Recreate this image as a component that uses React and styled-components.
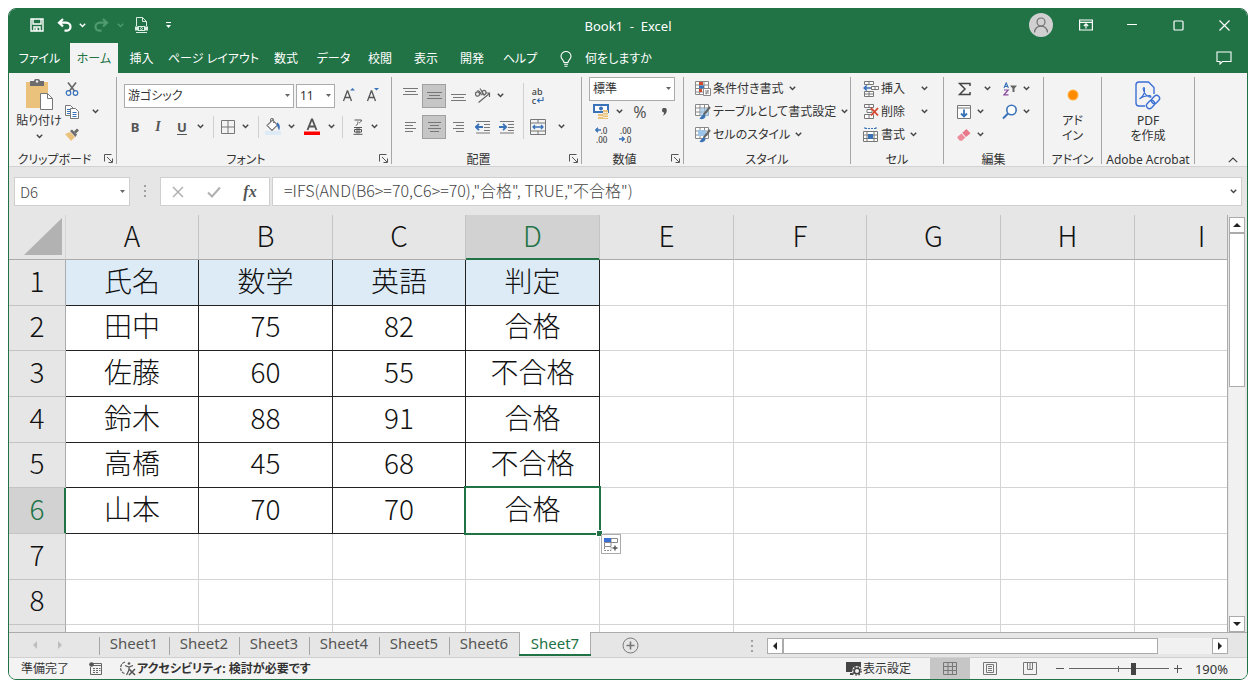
import React from "react";
import styled, { createGlobalStyle, css } from "styled-components";

const c = {
  green: "#217346",
  ribbon: "#f3f3f3",
  chrome: "#e6e6e6",
  line: "#ababab",
  gridLine: "#d4d4d4",
  ink: "#333333",
  blue: "#3a72b8",
};

const Global = createGlobalStyle`
  *, *::before, *::after { box-sizing: border-box; }
  body {
    margin: 0;
    padding: 8px 10px 9px 8px;
    background: #fff;
    color: ${c.ink};
    font: 12px/16px "Noto Sans", "Noto Sans CJK JP", sans-serif;
    font-feature-settings: "palt";
  }
  button, input, select {
    font: inherit;
    font-feature-settings: inherit;
    color: inherit;
    margin: 0;
  }
  svg { display: block; flex: none; }
`;

/* ---------- frame ---------- */

const Window = styled.div`
  display: flex;
  flex-direction: column;
  height: calc(100vh - 17px);
  min-height: 480px;
  border: 1px solid ${c.green};
  border-radius: 8px;
  overflow: hidden;
  background: ${c.ribbon};
`;

const TitleBar = styled.header`
  display: grid;
  grid-template-columns: 1fr auto 1fr;
  align-items: center;
  height: 34px;
  flex: none;
  background: ${c.green};
  color: #fff;
`;

const QuickAccess = styled.div`
  display: flex;
  align-items: center;
  padding: 0 0 2px 15px;
`;

const Title = styled.h1`
  margin: 0;
  font-size: 13px;
  font-weight: 400;
  white-space: pre;
`;

const Controls = styled.div`
  display: flex;
  justify-content: flex-end;
  padding-bottom: 2px;
`;

const Tool = styled.button`
  display: flex;
  flex: none;
  align-items: center;
  justify-content: center;
  width: ${(p) => p.$w || 24}px;
  height: ${(p) => p.$h || 23}px;
  padding: 0;
  border: 0;
  background: none;
  ${(p) =>
    p.$pressed &&
    css`
      background: #c6c6c6;
      border: 1px solid #a0a0a0;
    `}
`;

const TabRow = styled.nav`
  display: flex;
  align-items: stretch;
  height: 30px;
  flex: none;
  background: ${c.green};
  color: #fff;
`;

const Tab = styled.button`
  width: ${(p) => p.$w}px;
  padding: 2px 0 0;
  border: 0;
  white-space: nowrap;
  background: ${(p) => (p.$active ? c.ribbon : "none")};
  color: ${(p) => (p.$active ? c.green : "#fff")};
`;

const TellMe = styled.button`
  display: flex;
  align-items: center;
  gap: 13px;
  padding: 2px 0 0 15px;
  border: 0;
  background: none;
  white-space: nowrap;
`;

const Spacer = styled.div`
  flex: 1;
`;

/* ---------- ribbon ---------- */

const Ribbon = styled.div`
  display: flex;
  height: 94px;
  flex: none;
  padding-top: 4px;
  background: ${c.ribbon};
  border-bottom: 1px solid #d2d2d2;
`;

const Group = styled.section`
  display: flex;
  flex-direction: column;
  flex: none;
  width: ${(p) => p.$w}px;
  height: 87px;
  border-right: 1px solid #a6a6a6;
`;

const GroupBody = styled.div`
  display: flex;
  flex: 1;
  padding-left: ${(p) => p.$pad || 0}px;
`;

const GroupFoot = styled.div`
  display: grid;
  grid-template-columns: 1fr ${(p) => (p.$launch ? "16px" : "0")};
  align-items: center;
  height: 14px;
  text-align: center;
  white-space: nowrap;
`;

const GroupName = styled.span`
  padding-top: 3px;
  line-height: 14px;
`;

const Stack = styled.div`
  display: flex;
  flex-direction: column;
  padding-top: ${(p) => p.$top || 0}px;
`;

const Line = styled.div`
  display: flex;
  align-items: center;
  height: ${(p) => p.$h || 23}px;
  gap: ${(p) => p.$gap || 0}px;
  white-space: nowrap;
`;

const Rule = styled.span`
  flex: none;
  width: 1px;
  height: ${(p) => p.$h || 22}px;
  margin: ${(p) => p.$m || "0"};
  background: #d0d0d0;
`;

const Gap = styled.span`
  flex: none;
  width: ${(p) => p.$w}px;
`;

const BigButton = styled.button`
  display: flex;
  flex-direction: column;
  align-items: center;
  width: ${(p) => p.$w}px;
  padding: 0;
  border: 0;
  background: none;
  line-height: 15px;
  white-space: nowrap;
`;

const BigIcon = styled.span`
  display: flex;
  align-items: center;
  justify-content: center;
  height: 36px;
`;

const MenuButton = styled.button`
  display: flex;
  align-items: center;
  gap: 2px;
  height: 23px;
  padding: 0;
  border: 0;
  background: none;
  white-space: nowrap;
`;

const MenuText = styled.span`
  min-width: ${(p) => p.$w || 0}px;
  margin-right: 3px;
  text-align: left;
`;

const Letter = styled.span`
  font-size: ${(p) => p.$s || 14}px;
  line-height: 18px;
  font-weight: ${(p) => (p.$bold ? 700 : 400)};
  font-style: ${(p) => (p.$italic ? "italic" : "normal")};
  font-family: ${(p) => (p.$italic ? '"Liberation Serif", serif' : "inherit")};
  text-decoration: ${(p) => (p.$under ? "underline" : "none")};
  text-underline-offset: 2px;
  color: #555;
`;

const Combo = styled.span`
  position: relative;
  display: block;
  flex: none;
  width: ${(p) => p.$w}px;
  height: 24px;
  background: #fff;
  border: 1px solid #ababab;

  select {
    appearance: none;
    display: block;
    width: 100%;
    height: 22px;
    padding: 0 0 0 3px;
    border: 0;
    background: none;
  }
  svg {
    position: absolute;
    right: 3px;
    top: 9px;
    pointer-events: none;
  }
`;

const CollapseArea = styled.div`
  display: flex;
  flex: 1;
  align-items: flex-end;
  justify-content: flex-end;
  padding-right: 4px;
`;

/* ---------- formula bar ---------- */

const FormulaBar = styled.div`
  display: flex;
  align-items: flex-start;
  height: 48px;
  flex: none;
  padding: 10px 5px 0;
  background: ${c.chrome};
  color: #444;
`;

const FieldBox = styled.div`
  display: flex;
  align-items: center;
  flex: ${(p) => (p.$grow ? "1" : "none")};
  width: ${(p) => (p.$w ? p.$w + "px" : "auto")};
  height: 29px;
  padding-right: 4px;
  background: #fff;
  border: 1px solid #cfcfcf;

  input {
    flex: 1;
    min-width: 0;
    height: 27px;
    border: 0;
    background: none;
    outline: 0;
    padding: 0 0 ${(p) => (p.$grow ? "3px 11px" : "0 5px")};
    font-family: "Noto Sans CJK JP", sans-serif;
    font-size: ${(p) => (p.$grow ? 16 : 15)}px;
    font-weight: 300;
    font-feature-settings: normal;
  }
`;

const Dots = styled.span`
  display: flex;
  justify-content: center;
  align-items: center;
  width: 30px;
  height: 28px;
`;

/* ---------- sheet ---------- */

const SheetArea = styled.main`
  display: flex;
  flex: 1;
  min-height: 0;
  background: ${c.chrome};
`;

const Pane = styled.div`
  flex: 1;
  min-width: 0;
  overflow: hidden;
  border-right: 1px solid ${c.line};
`;

const Table = styled.table`
  table-layout: fixed;
  width: 1260px;
  border-spacing: 0;
  background: #fff;
  color: #111;
  font: 300 28px/36px "Noto Sans CJK JP", sans-serif;
  font-feature-settings: normal;
  text-align: center;

  th, td { padding: 0 0 6px; font-weight: 300; }
  thead tr { height: 45px; }
  thead th, thead td { padding-bottom: 4px; }
  tbody tr { height: 46px; }
  tbody tr:nth-child(3n + 2) { height: 45px; }
`;

const Corner = styled.td`
  background: ${c.chrome};
  border-right: 1px solid ${c.gridLine};
  border-bottom: 1px solid ${c.line};

  svg { margin: 3px 0 0 15px; }
`;

const ColHead = styled.th`
  background: ${(p) => (p.$on ? "#d2d2d2" : c.chrome)};
  color: ${(p) => (p.$on ? c.green : "#111")};
  border-right: 1px solid #c4c4c4;
  border-bottom: 1px solid ${(p) => (p.$on ? c.green : c.line)};
  box-shadow: ${(p) => (p.$on ? `inset 0 -1px ${c.green}` : "none")};
`;

const RowHead = styled.th`
  background: ${(p) => (p.$on ? "#d2d2d2" : c.chrome)};
  color: ${(p) => (p.$on ? c.green : "#111")};
  border-right: 1px solid ${(p) => (p.$on ? c.green : c.line)};
  border-bottom: 1px solid #c4c4c4;
  box-shadow: ${(p) => (p.$on ? `inset -1px 0 ${c.green}` : "none")};
`;

const Cell = styled.td`
  position: relative;
  background: ${(p) => (p.$head ? "#ddebf7" : "#fff")};
  border-right: 1px solid ${(p) => (p.$framed ? "#222" : c.gridLine)};
  border-bottom: 1px solid ${(p) => (p.$framed ? "#222" : c.gridLine)};
`;

const Selection = styled.span`
  position: absolute;
  inset: -2px -2px -2px -2px;
  border: 2px solid ${c.green};
  z-index: 1;

  &::after {
    content: "";
    position: absolute;
    right: -3px;
    bottom: -3px;
    width: 5px;
    height: 5px;
    background: ${c.green};
    outline: 1px solid #fff;
  }
`;

const FillOptions = styled.button`
  position: absolute;
  left: 100%;
  top: 100%;
  margin: 1px 0 0 2px;
  width: 20px;
  height: 20px;
  padding: 1px;
  border: 1px solid #ababab;
  background: #fff;
  z-index: 2;
`;

const VScroll = styled.div`
  display: flex;
  flex-direction: column;
  width: 16px;
  flex: none;
  margin: 2px 2px 0 1px;
  background: #f1f1f1;
`;

const ScrollButton = styled.button`
  display: flex;
  align-items: center;
  justify-content: center;
  flex: none;
  width: 16px;
  height: 16px;
  padding: 0;
  border: 1px solid #ababab;
  background: #fff;
`;

const Thumb = styled.div`
  flex: none;
  background: #fff;
  border: 1px solid #ababab;
  ${(p) => (p.$vertical ? "height: 37%;" : "width: 375px; height: 16px;")}
`;

/* ---------- bottom bars ---------- */

const SheetBar = styled.div`
  display: flex;
  height: 25px;
  flex: none;
  border-top: 1px solid ${c.line};
  background: ${c.chrome};
  color: #555;
`;

const SheetNav = styled.div`
  display: flex;
  width: 90px;
  padding-left: 14px;
`;

const SheetTab = styled.button`
  position: relative;
  width: ${(p) => (p.$active ? 72 : 70)}px;
  height: ${(p) => (p.$active ? 24 : 23)}px;
  margin-top: ${(p) => (p.$active ? -1 : 0)}px;
  padding: 0 0 ${(p) => (p.$active ? 2 : 3)}px;
  border: 0;
  background: ${(p) => (p.$active ? "#fff" : "none")};
  color: ${(p) => (p.$active ? c.green : "#555")};
  box-shadow: ${(p) => (p.$active ? `inset 0 -2px ${c.green}, inset 1px 0 ${c.line}, inset -1px 0 ${c.line}` : "none")};
  font-size: 15px;
  line-height: 20px;

  &::before {
    content: "";
    display: ${(p) => (p.$active ? "none" : "block")};
    position: absolute;
    left: 0;
    top: 4px;
    width: 1px;
    height: 18px;
    background: #a6a6a6;
  }
`;

const HScroll = styled.div`
  display: flex;
  width: 461px;
  height: 16px;
  margin: 5px 19px 0 14px;
  background: #f1f1f1;
`;

const StatusBar = styled.footer`
  display: flex;
  align-items: center;
  height: 22px;
  flex: none;
  padding: 0 19px 0 12px;
  border-top: 1px solid #d0d0d0;
  background: ${c.ribbon};
  white-space: nowrap;
`;

const StatusButton = styled.button`
  display: flex;
  align-items: center;
  gap: 1px;
  margin-left: ${(p) => p.$left || 0}px;
  padding: 0;
  border: 0;
  background: none;
  font-weight: ${(p) => (p.$bold ? 700 : 400)};
`;

const View = styled.button`
  display: flex;
  align-items: center;
  justify-content: center;
  width: 40px;
  height: 21px;
  padding: 0;
  border: 0;
  background: ${(p) => (p.$on ? "#c6c6c6" : "none")};
`;

const Zoom = styled.label`
  position: relative;
  display: flex;
  width: 100px;

  &::before {
    content: "";
    position: absolute;
    left: 49px;
    top: 5px;
    width: 1px;
    height: 6px;
    background: #666;
  }
  input {
    appearance: none;
    position: relative;
    width: 100px;
    height: 16px;
    background: linear-gradient(#666, #666) center / 100% 1px no-repeat;
  }
  input::-webkit-slider-thumb {
    appearance: none;
    width: 5px;
    height: 12px;
    background: #444;
  }
`;

const Percent = styled.output`
  width: 42px;
  font-size: 13px;
  text-align: right;
`;

/* ---------- icons ---------- */

const Svg = ({ w = 16, h = w, s = "#666", sw = 1, children, ...r }) => (
  <svg width={w} height={h} viewBox={`0 0 ${w} ${h}`} fill="none" stroke={s} strokeWidth={sw} aria-hidden="true" {...r}>
    {children}
  </svg>
);

const Chev = ({ color = "#444" }) => (
  <Svg w={7} h={5} s={color} sw={1.4}><path d="M.8.8 3.5 3.6 6.2.8" /></Svg>
);
const Down = ({ color = "#666" }) => (
  <Svg w={5} h={3} s="none"><path d="M0 0h5L2.5 3z" fill={color} /></Svg>
);

const More = ({ w, label }) => (
  <Tool $w={w} aria-label={label}><Chev /></Tool>
);

const Lines = ({ rows, w = 15, h = 16 }) => (
  <Svg w={w} h={h} s="#777">
    {rows.map(([x1, x2, y]) => <path key={y} d={`M${x1} ${y}.5H${x2}`} />)}
  </Svg>
);

const SaveIcon = () => (
  <Svg w={14} s="#fff" sw={1.4}><path d="M1 1h12v12H1zM3 1v5h8V1M4 13V9h6v4" /><path d="M6.500 10v3" strokeWidth="2" /></Svg>
);
const UndoIcon = ({ flip, color }) => (
  <Svg w={15} h={14} s={color} sw={2.2}>
    <g transform={flip ? "translate(15 0) scale(-1 1)" : undefined}>
      <path d="M6 1 2 4.7 6 8.4M2.2 4.7H9c6 0 6 8 0 8H7.5" />
    </g>
  </Svg>
);
const PageIcon = () => (
  <Svg w={13} h={16} s="#dbeee3">
    <path d="M1.5 9V.5h6l4 4V9M7.5.5v4h4" />
    <path d="M0 9.500h3v4H0zM10 9.500h3v4h-3z" fill="#dbeee3" stroke="none" />
    <path d="M1 15.500h11" />
    <rect x="3.500" y="9.500" width="6" height="4" /><circle cx="6.500" cy="11.500" r="1" />
  </Svg>
);
const PersonIcon = () => (
  <Svg w={24} s="#707070" sw={1.2}>
    <circle cx="12" cy="12" r="12" fill="#d0d0d0" stroke="none" />
    <circle cx="12" cy="9" r="4" /><path d="M5.500 19.500c0-8.500 13-8.500 13 0" />
  </Svg>
);
const RibbonIcon = () => (
  <Svg w={14} h={12} s="#fff" sw={1.2}><path d="M.6 1h12.800v10H.6zM.6 3.300h12.800M7 9.500V5M4.800 7 7 4.900 9.200 7" /></Svg>
);
const BulbIcon = () => (
  <Svg w={12} h={16} s="#fff" sw={1.1}><path d="M4 11.500c0-2.500-3-3-3-6.300a5 4.700 0 0 1 10 0c0 3.300-3 3.800-3 6.300zM4 13.300h4M4.500 15.200h3" /></Svg>
);
const CommentIcon = () => (
  <Svg w={16} h={14} s="#fff" sw={1.1}><path d="M1 1h14v9.500H6.500L4 13v-2.500H1z" /></Svg>
);

const PasteIcon = () => (
  <Svg w={30} h={32} s="none">
    <path d="M2 3h22v26H2z" fill="#eac27c" />
    <path d="M6 2h4c0-3 6-3 6 0h4v5H6z" fill="#6d6d6d" /><circle cx="13" cy="2.500" r="1.200" fill="#eee" />
    <path d="M16.500 14.500h7l5 5v11h-12z" fill="#fff" stroke="#777" /><path d="M23.500 14.500v5h5" stroke="#777" />
  </Svg>
);
const CutIcon = () => (
  <Svg w={14} s="#666" sw={1.6}>
    <path d="M3 .5 9.500 9M11 .5 4.500 9" />
    <circle cx="3.500" cy="11" r="2.300" stroke={c.blue} strokeWidth="1.200" /><circle cx="10.500" cy="11" r="2.300" stroke={c.blue} strokeWidth="1.200" />
  </Svg>
);
const CopyIcon = () => (
  <Svg w={14} s="#777"><path d="M.5.5h5l3 3v7h-8z" fill="#fff" /><path d="M2 4.500h4M2 6.500h4M2 8.500h3" stroke={c.blue} /><path d="M5.500 3.500h5l3 3v7h-8z" fill="#fff" /><path d="M7.500 7.500h4M7.500 9.500h4M7.500 11.500h4" stroke={c.blue} /></Svg>
);
const BrushIcon = () => (
  <Svg w={14} h={13} s="none"><path d="M0 6l5-2 5 5-4 4z" fill="#eac27c" /><path d="M5 3l2-1.500 5 5L10.500 9z" fill="#6d6d6d" /><path d="M9 3.500 12 .5l2 2-3 3z" fill="#6d6d6d" /></Svg>
);
const SizeIcon = ({ down }) => (
  <Svg w={14} h={16} s="#555" sw={1.3}>
    <path d="M1.500 13 5.300 3h.4l3.800 10M3 9.500h5" />
    <path d={down ? "M8 0h5l-2.500 2.500z" : "M8 2.500h5L10.500 0z"} fill={c.blue} stroke="none" />
  </Svg>
);
const BordersIcon = () => (
  <Svg w={14} s="#777"><path d="M.5.5h13v13H.5zM7 .5v13M.5 7h13" /></Svg>
);
const BucketIcon = () => (
  <Svg w={16} h={17} s="#777" sw={1.100}>
    <path d="M2 7.500 7.500 2l5 5-5.500 5.500zM5.500 4V2c0-2 3-2 3 0v3" fill="#fff" />
    <path d="M12 4.500c3 1 3.500 5 2 8l-2-5z" fill={c.blue} stroke="none" /><path d="M0 13h16v4H0z" fill="#ddebf7" stroke="none" />
  </Svg>
);
const FontColor = () => (
  <Svg w={16} h={17} s="#555" sw={1.800}><path d="M3.500 12 7.700 1.500h.6L12.500 12M5 8.500h6" /><path d="M0 13.500h16V17H0z" fill="#f00" stroke="none" /></Svg>
);
const RubyIcon = () => (
  <Svg w={10} h={16} s="#555" sw={1}><path d="M1.500 1h7c0 2-2 2.500-2.500 3M4.800 2.500v1c0 1.500-.5 2.500-2 3M1 8.500h8M1.500 10.500h7v2.500h-7zM4 8.500v6M6 8.500v6M.5 15.300h9" /></Svg>
);
const OrientIcon = () => (
  <Svg w={18} h={16} s="#666" sw={1.200}>
    <ellipse cx="3.500" cy="6" rx="2" ry="2.200" /><path d="M3 3.200c1-1 2.500 0 3 1l1.500 3M6 .5l4.500 7" /><ellipse cx="10" cy="4.500" rx="2" ry="2.200" />
    <path d="M4.500 14.500 15.500 5.500M11.500 5h4v4" />
  </Svg>
);
const IndentIcon = ({ right }) => (
  <Svg w={16} h={14} s="#777">
    <path d="M1 1.500h14M9 4.500h6M9 7.500h6M9 10.500h6M1 13h14" />
    <path d={right ? "M0 7h7M4 3.800 7.200 7 4 10.200" : "M8 7H1M4 3.800.8 7 4 10.200"} stroke={c.blue} strokeWidth="1.800" />
  </Svg>
);
const MergeIcon = () => (
  <Svg w={16} s="#777">
    <path d="M.5.5h15v15H.5zM.5 4h15M.5 12h15M8 .5V4M8 12v3.500" /><path d="M3 8h10M5 6 3 8l2 2M11 6l2 2-2 2" stroke={c.blue} strokeWidth="1.300" />
  </Svg>
);
const SmallText = styled.span`
  display: flex;
  flex-direction: column;
  font-size: ${(p) => p.$s || 8}px;
  line-height: 9px;
  color: #444;
  text-align: left;

  b { font-weight: 500; display: flex; align-items: center; justify-content: ${(p) => (p.$end ? "flex-end" : "flex-start")}; }
`;
const Arrow = ({ right }) => (
  <Svg w={6} h={6} s={c.blue} sw={1.400}><path d={right ? "M0 3h5M3 .8 5.200 3 3 5.200" : "M6 3H1M3 .8.8 3 3 5.200"} /></Svg>
);
const WrapArrow = () => (
  <Svg w={8} h={6} s={c.blue} sw={1.200}><path d="M7 0v3.500H1.500M3.500 1.500l-2 2 2 2" /></Svg>
);
const MoneyIcon = () => (
  <Svg w={16} s="none">
    <path d="M0 0h16v9H0z" fill={c.blue} /><path d="M2 2h12v5H2z" fill="#fff" /><circle cx="8" cy="4.500" r="2" fill={c.blue} />
    <path d="M10 6h5v9h-5zM5 10h5v5H5z" fill="#eac27c" /><path d="M10 8.500h5M10 11h5M10 13.500h5M5 12.500h5" stroke="#fff" strokeWidth=".7" />
  </Svg>
);

const GridBase = () => <path d="M.5.5h13v11H.5zM.5 4h13M.5 8h13M5 .5v11M9.500.5v11" fill="#fff" />;
const CondIcon = () => (
  <Svg w={16} s="#888">
    <path d="M.5.5h13v13H.5zM.5 4h13M.5 7.500h13M.5 11h13M4.500.5v13M9 .5v13" fill="#fff" />
    <path d="M4 1h4v3H4zM4 8h3v3H4z" fill="#d0492b" stroke="none" /><path d="M4 4.500h5v3H4z" fill={c.blue} stroke="none" />
    <path d="M8.500 7.500h7v7h-7z" fill="#fff" /><path d="M10 10h4M10 12h4M13 9l-2 4.500" />
  </Svg>
);
const TableIcon = ({ fill }) => (
  <Svg w={16} s="#888">
    <GridBase />
    {fill ? <path d="M3 3h8v6H3z" fill="#9dc3e6" stroke="none" /> : <path d="M5 4h9v8H5z" fill="#9dc3e6" stroke="none" opacity=".7" />}
    <path d="M15 3 8.500 11" stroke="#666" strokeWidth="2" /><path d="M9 10.500c-1 0-3 1.500-4.500 4.500 3.500.5 6-.5 6-3z" fill={c.blue} stroke="none" />
  </Svg>
);
const InsertIcon = () => (
  <Svg w={16} s="#777">
    <path d="M1.500.5h9v3h-9zM6 .5v3M1.500 10.500h9v5h-9zM6 10.500v5M1.500 13h9M8.500 5.500h7v3h-7zM12 5.500v3" fill="#fff" /><path d="M8 7H1M3.800 4.500 1.200 7l2.600 2.500" stroke={c.blue} strokeWidth="1.600" />
  </Svg>
);
const DeleteIcon = () => (
  <Svg w={16} s="#777">
    <path d="M1.500.5h9v3h-9zM6 .5v3M1.500 10.500h9v4h-9zM6 10.500v4M4 5.500h5v3H4z" fill="#fff" /><path d="m8 4 7 7.500M15 4 8 11.500" stroke="#d8432b" strokeWidth="1.800" />
  </Svg>
);
const FormatIcon = () => (
  <Svg w={16} s="#777">
    <path d="M.5 4.500h14v10H.5zM4 4.500v10M11 4.500v10M.5 8h14M.5 11.500h14" fill="#fff" /><path d="M5 7h5v5H5z" fill={c.blue} stroke="none" /><path d="M2 1.500h11M2 0v3M13 0v3" stroke={c.blue} strokeDasharray="2 1" />
  </Svg>
);
const SigmaIcon = () => (
  <Svg w={13} h={14} s="#444" sw={1.500}><path d="M12 4V1.500H1.500L7 7l-5.500 5.500H12V10" /></Svg>
);
const SortIcon = () => (
  <Svg w={14} h={14} s="none">
    <path d="M1 6 3.200.8 5.400 6M1.800 4.400h3" stroke={c.blue} strokeWidth="1.100" /><path d="M1 8h4.200L1 12.800h4.500" stroke="#8a4ba0" strokeWidth="1.200" />
    <path d="M7 3.500h7L11.500 6.500V10h-2V6.500z" fill="#666" />
  </Svg>
);
const FillIcon = () => (
  <Svg w={14} s="#777"><path d="M.5.5h13v13H.5zM.5 3h13" fill="#fff" /><path d="M7 4.500v7M4 8.500l3 3 3-3" stroke={c.blue} strokeWidth="1.800" /></Svg>
);
const FindIcon = () => (
  <Svg w={16} s={c.blue} sw={1.600}><circle cx="9.500" cy="6" r="4.700" fill="#fff" /><path d="M6 9.500 1 14.500" strokeWidth="2" /></Svg>
);
const EraserIcon = () => (
  <Svg w={14} h={12} s="none"><path d="M5.200 3.800 9.500 0 13.500 4.200 9 8z" fill="#e8788a" /><path d="M4.500 4.400 8.300 8.600 5 11.700H2.800L.5 9v-1.300z" fill="#ee8c9b" /></Svg>
);
const AddinIcon = () => (
  <Svg w={12} s="none"><circle cx="6" cy="6" r="5.500" fill="#ffb84d" /><circle cx="6" cy="6" r="4.500" fill="#ff8c00" /></Svg>
);
const AcrobatIcon = () => (
  <Svg w={26} h={30} s="#3b6fd4" sw={1.400}>
    <path d="M10 26H4a3 3 0 0 1-3-3V5a3 3 0 0 1 3-3h9.500L19 7.500V14" />
    <path d="M4.500 19c3.500-2.500 5.500-6.500 5-10.500 0-1.500-1.800-1-1.300.7 1 4 3.500 7.500 6.800 8 1.600.2 1-1.600-.5-1.600-3.500 0-7 1-10 3.400z" strokeWidth="1.100" />
    <g transform="rotate(-45 18 22)"><rect x="10" y="19" width="9" height="6" rx="3" /><rect x="17" y="19" width="9" height="6" rx="3" /></g>
  </Svg>
);
const LaunchIcon = () => (
  <Svg w={9} s="#555"><path d="M.5 7.500v-7h7M3 3l5 5M8.500 4.500v4h-4" /></Svg>
);
const Tri = ({ dir, color = "#222" }) => {
  const d = { up: "M0 6h8L4 2z", down: "M0 2h8L4 6z", left: "M6 0v8L2 4z", right: "M2 0v8l4-4z" }[dir];
  return <Svg w={8} s="none"><path d={d} fill={color} /></Svg>;
};
const DotsIcon = () => (
  <Svg w={2} h={12} s="none">{[0, 5, 10].map((y) => <path key={y} d={`M0 ${y}h2v2H0z`} fill="#a0a0a0" />)}</Svg>
);

/* ---------- parts ---------- */

const RibbonGroup = ({ w, pad, name, launch, children }) => (
  <Group $w={w} aria-label={name}>
    <GroupBody $pad={pad}>{children}</GroupBody>
    <GroupFoot $launch={launch}>
      <GroupName>{name}</GroupName>
      {launch && <Tool $w={16} $h={14} aria-label={`${name}の設定`}><LaunchIcon /></Tool>}
    </GroupFoot>
  </Group>
);

const Menu = ({ icon, text, w }) => (
  <MenuButton>{icon}<MenuText $w={w}>{text}</MenuText><Chev /></MenuButton>
);

const Select = ({ w, label, value }) => (
  <Combo $w={w}>
    <select aria-label={label} defaultValue={value}><option>{value}</option></select>
    <Down />
  </Combo>
);

const tabs = [
  ["ファイル", 61], ["ホーム", 48], ["挿入", 47], ["ページ レイアウト", 97], ["数式", 48],
  ["データ", 47], ["校閲", 46], ["表示", 46], ["開発", 46], ["ヘルプ", 50],
];

const columns = [
  ["A", 133], ["B", 134], ["C", 133], ["D", 134], ["E", 134],
  ["F", 133], ["G", 134], ["H", 134], ["I", 134],
];

const rows = [
  ["氏名", "数学", "英語", "判定"],
  ["田中", "75", "82", "合格"],
  ["佐藤", "60", "55", "不合格"],
  ["鈴木", "88", "91", "合格"],
  ["高橋", "45", "68", "不合格"],
  ["山本", "70", "70", "合格"],
  [],
  [],
];

const sheets = [1, 2, 3, 4, 5, 6, 7];

export default function App() {
  return (
    <>
      <Global />
      <Window>
        <TitleBar>
          <QuickAccess>
            <Tool $w={26} aria-label="上書き保存"><SaveIcon /></Tool>
            <Tool $w={28} aria-label="元に戻す"><UndoIcon color="#fff" /></Tool>
            <Tool $w={8} aria-label="元に戻す履歴"><Chev color="#fff" /></Tool>
            <Tool $w={30} aria-label="やり直し"><UndoIcon flip color="#4f9a70" /></Tool>
            <Tool $w={8} aria-label="やり直し履歴"><Chev color="#4f9a70" /></Tool>
            <Tool $w={34} aria-label="印刷プレビュー"><PageIcon /></Tool>
            <Tool $w={20} aria-label="カスタマイズ">
              <Svg w={5} h={6} s="none"><path d="M0 0h5v1H0zM0 3h5L2.500 6z" fill="#fff" /></Svg>
            </Tool>
          </QuickAccess>
          <Title>{"Book1  -  Excel"}</Title>
          <Controls>
            <Tool $w={44} $h={32} aria-label="アカウント"><PersonIcon /></Tool>
            <Tool $w={46} $h={32} aria-label="リボンの表示オプション"><RibbonIcon /></Tool>
            <Tool $w={46} $h={32} aria-label="最小化"><Svg w={10} h={2} s="#fff"><path d="M0 .5h10" /></Svg></Tool>
            <Tool $w={46} $h={32} aria-label="最大化"><Svg w={11} s="#fff" sw={1.200}><rect x="1" y="1" width="9" height="9" rx="1" /></Svg></Tool>
            <Tool $w={46} $h={32} aria-label="閉じる"><Svg w={11} s="#fff" sw={1.200}><path d="m.5.5 10 10M10.500.5l-10 10" /></Svg></Tool>
          </Controls>
        </TitleBar>

        <TabRow>
          {tabs.map(([t, w]) => <Tab key={t} $w={w} $active={t === "ホーム"}>{t}</Tab>)}
          <TellMe><BulbIcon />何をしますか</TellMe>
          <Spacer />
          <Tool $w={46} $h={30} aria-label="コメント"><CommentIcon /></Tool>
        </TabRow>

        <Ribbon>
          <RibbonGroup w={108} pad={5} name="クリップボード" launch>
            <BigButton $w={50}>
              <BigIcon><PasteIcon /></BigIcon>
              貼り付け
              <Stack $top={6}><Chev /></Stack>
            </BigButton>
            <Stack>
              <Tool $w={16} aria-label="切り取り"><CutIcon /></Tool>
              <Tool $w={16} aria-label="コピー"><CopyIcon /></Tool>
              <Tool $w={16} aria-label="書式のコピー"><BrushIcon /></Tool>
            </Stack>
            <Stack $top={23}><More w={30} label="コピーのオプション" /></Stack>
          </RibbonGroup>

          <RibbonGroup w={275} pad={7} name="フォント" launch>
            <Stack $top={3}>
              <Line $h={31} $gap={2}>
                <Select w={170} label="フォント" value="游ゴシック" />
                <Select w={39} label="フォント サイズ" value="11" />
                <Line>
                  <Tool aria-label="フォント サイズの拡大"><SizeIcon /></Tool>
                  <Tool aria-label="フォント サイズの縮小"><SizeIcon down /></Tool>
                </Line>
              </Line>
              <Line $h={31}>
                <Tool $w={22} aria-label="太字"><Letter $bold $s={13}>B</Letter></Tool>
                <Tool aria-label="斜体"><Letter $italic $bold>I</Letter></Tool>
                <Tool aria-label="下線"><Letter $bold $under $s={13}>U</Letter></Tool>
                <More w={12} label="下線の種類" />
                <Rule $m="0 6px 0 7px" />
                <Tool $w={16} aria-label="罫線"><BordersIcon /></Tool>
                <More w={18} label="罫線の種類" />
                <Rule $m="0 3px 0 4px" />
                <Tool $w={22} aria-label="塗りつぶしの色"><BucketIcon /></Tool>
                <More w={14} label="塗りつぶしの色の選択" />
                <Tool $w={28} aria-label="フォントの色"><FontColor /></Tool>
                <More w={10} label="フォントの色の選択" />
                <Rule $m="0 5px 0 6px" />
                <Tool $w={20} aria-label="ふりがな"><RubyIcon /></Tool>
                <More w={12} label="ふりがなの設定" />
              </Line>
            </Stack>
          </RibbonGroup>

          <RibbonGroup w={190} pad={6} name="配置" launch>
            <Stack $top={3}>
              <Line $h={31}>
                <Tool aria-label="上揃え"><Lines rows={[[0, 15, 0], [2, 13, 3], [0, 15, 6]]} /></Tool>
                <Tool $h={24} $pressed aria-label="上下中央揃え"><Lines rows={[[0, 15, 4], [2, 13, 7], [0, 15, 10]]} /></Tool>
                <Tool aria-label="下揃え"><Lines rows={[[0, 15, 6], [2, 13, 9], [0, 15, 12]]} /></Tool>
                <Tool $w={26} aria-label="方向"><OrientIcon /></Tool>
                <More w={8} label="方向の選択" />
              </Line>
              <Line $h={31}>
                <Tool aria-label="左揃え"><Lines w={11} rows={[[0, 11, 3], [0, 8, 6], [0, 11, 9], [0, 8, 12]]} /></Tool>
                <Tool $h={24} $pressed aria-label="中央揃え"><Lines w={13} rows={[[0, 13, 3], [2, 11, 6], [0, 13, 9], [2, 11, 12]]} /></Tool>
                <Tool aria-label="右揃え"><Lines w={11} rows={[[0, 11, 3], [3, 11, 6], [0, 11, 9], [3, 11, 12]]} /></Tool>
                <Tool $w={26} aria-label="インデントを減らす"><IndentIcon /></Tool>
                <Tool $w={22} aria-label="インデントを増やす"><IndentIcon right /></Tool>
              </Line>
            </Stack>
            <Rule $h={56} $m="6px 0 0 5px" />
            <Stack $top={3}>
              <Line $h={31}>
                <Tool $w={28} aria-label="折り返して全体を表示する">
                  <SmallText $s={9}><b>ab</b><b>c<WrapArrow /></b></SmallText>
                </Tool>
              </Line>
              <Line $h={31}>
                <Tool $w={28} aria-label="セルを結合して中央揃え"><MergeIcon /></Tool>
                <More w={18} label="結合の種類" />
              </Line>
            </Stack>
          </RibbonGroup>

          <RibbonGroup w={102} pad={7} name="数値" launch>
            <Stack>
              <Line><Select w={86} label="表示形式" value="標準" /></Line>
              <Line>
                <Tool aria-label="通貨表示形式"><MoneyIcon /></Tool>
                <More w={12} label="通貨の選択" />
                <Tool $w={30} $h={20} aria-label="パーセント スタイル"><Letter $s={16}>%</Letter></Tool>
                <Tool $w={18} aria-label="桁区切りスタイル">
                  <Svg w={5} h={8} s="none"><path d="M0 2.200a2.300 2.300 0 0 1 4.800 0C4.800 5 3 7 .8 7.800c1-1.300 1.400-2.300 1.200-3.300C.8 4.500 0 3.500 0 2.200z" fill="#555" /></Svg>
                </Tool>
              </Line>
              <Line>
                <Tool aria-label="小数点以下の表示桁数を増やす"><SmallText $end><b><Arrow />.0</b><b>.00</b></SmallText></Tool>
                <Tool aria-label="小数点以下の表示桁数を減らす"><SmallText $end><b>.00</b><b><Arrow right />.0</b></SmallText></Tool>
              </Line>
            </Stack>
          </RibbonGroup>

          <RibbonGroup w={167} pad={11} name="スタイル">
            <Stack>
              <Menu icon={<CondIcon />} text="条件付き書式" />
              <Menu icon={<TableIcon />} text="テーブルとして書式設定" />
              <Menu icon={<TableIcon fill />} text="セルのスタイル" />
            </Stack>
          </RibbonGroup>

          <RibbonGroup w={93} pad={12} name="セル">
            <Stack>
              <Menu icon={<InsertIcon />} text="挿入" w={35} />
              <Menu icon={<DeleteIcon />} text="削除" w={35} />
              <Menu icon={<FormatIcon />} text="書式" />
            </Stack>
          </RibbonGroup>

          <RibbonGroup w={100} pad={11} name="編集">
            <Stack>
              <Line>
                <Tool $w={18} aria-label="合計"><SigmaIcon /></Tool><More w={28} label="関数の選択" />
                <Tool $w={18} aria-label="並べ替えとフィルター"><SortIcon /></Tool><More w={14} label="並べ替えの選択" />
              </Line>
              <Line>
                <Tool $w={18} aria-label="フィル"><FillIcon /></Tool><More w={14} label="フィルの選択" />
                <Gap $w={14} />
                <Tool $w={18} aria-label="検索と選択"><FindIcon /></Tool><More w={14} label="検索の選択" />
              </Line>
              <Line>
                <Tool $w={18} aria-label="クリア"><EraserIcon /></Tool><More w={14} label="クリアの選択" />
              </Line>
            </Stack>
          </RibbonGroup>

          <RibbonGroup w={58} name="アドイン">
            <BigButton $w={57}><BigIcon><AddinIcon /></BigIcon><span>アド</span><span>イン</span></BigButton>
          </RibbonGroup>

          <RibbonGroup w={93} name="Adobe Acrobat">
            <BigButton $w={92}><BigIcon><AcrobatIcon /></BigIcon><span>PDF</span><span>を作成</span></BigButton>
          </RibbonGroup>

          <CollapseArea>
            <Tool $w={20} $h={12} aria-label="リボンを折りたたむ"><Svg w={10} h={6} s="#444" sw={1.200}><path d="M.8 5.200 5 1l4.200 4.200" /></Svg></Tool>
          </CollapseArea>
        </Ribbon>

        <FormulaBar>
          <FieldBox $w={116}>
            <input aria-label="名前ボックス" defaultValue="D6" />
            <Down />
          </FieldBox>
          <Dots><DotsIcon /></Dots>
          <FieldBox $w={110}>
            <Tool $w={34} aria-label="キャンセル"><Svg w={12} s="#b0b0b0" sw={1.500}><path d="m1 1 10 10M11 1 1 11" /></Svg></Tool>
            <Tool $w={38} aria-label="入力"><Svg w={14} h={12} s="#b0b0b0" sw={2}><path d="m1 6.500 4 4L13 1.500" /></Svg></Tool>
            <Tool $w={34} aria-label="関数の挿入"><Letter $italic $bold $s={16}>fx</Letter></Tool>
          </FieldBox>
          <Gap $w={2} />
          <FieldBox $grow>
            <input aria-label="数式バー" defaultValue={'=IFS(AND(B6>=70,C6>=70),"合格", TRUE,"不合格")'} />
            <Chev />
          </FieldBox>
        </FormulaBar>

        <SheetArea>
          <Pane>
            <Table>
              <colgroup>
                <col width="57" />
                {columns.map(([n, w]) => <col key={n} width={w} />)}
              </colgroup>
              <thead>
                <tr>
                  <Corner><Svg w={38} h={37} s="none"><path d="M38 0v37H0z" fill="#b2b2b2" /></Svg></Corner>
                  {columns.map(([n]) => <ColHead key={n} scope="col" $on={n === "D"}>{n}</ColHead>)}
                </tr>
              </thead>
              <tbody>
                {rows.map((r, i) => (
                  <tr key={i}>
                    <RowHead scope="row" $on={i === 5}>{i + 1}</RowHead>
                    {columns.map(([n], j) => (
                      <Cell key={n} $framed={i < 6 && j < 4} $head={i === 0 && j < 4}>
                        {r[j]}
                        {i === 5 && n === "D" && (
                          <>
                            <Selection />
                            <FillOptions aria-label="オートフィル オプション">
                              <Svg w={16} s="#888">
                                <path d="M1.500 2.500h13v4h-13zM8 2.500v4M1.500 6.500v4H8v-4" /><path d="M1 2h7v4H1z" fill="#3b6fd4" stroke="none" />
                                <path d="M1.500 11v3.500H8V11" strokeDasharray="2 1" /><path d="M12 9.500v5M9.500 12h5" stroke="#555" strokeWidth="1.400" />
                              </Svg>
                            </FillOptions>
                          </>
                        )}
                      </Cell>
                    ))}
                  </tr>
                ))}
                <tr>
                  <RowHead as="td" />
                  {columns.map(([n]) => <Cell key={n} />)}
                </tr>
              </tbody>
            </Table>
          </Pane>
          <VScroll>
            <ScrollButton aria-label="上へスクロール"><Tri dir="up" /></ScrollButton>
            <Thumb $vertical />
            <Spacer />
            <ScrollButton aria-label="下へスクロール"><Tri dir="down" /></ScrollButton>
          </VScroll>
        </SheetArea>

        <SheetBar>
          <SheetNav>
            <Tool $w={24} aria-label="前のシート"><Tri dir="left" color="#bdbdbd" /></Tool>
            <Tool $w={26} aria-label="次のシート"><Tri dir="right" color="#bdbdbd" /></Tool>
          </SheetNav>
          {sheets.map((n) => <SheetTab key={n} $active={n === 7}>{`Sheet${n}`}</SheetTab>)}
          <Tool $w={78} $h={25} aria-label="新しいシート">
            <Svg w={17} s="#777"><circle cx="8.500" cy="8.500" r="7.500" /><path d="M8.500 4.500v8M4.500 8.500h8" strokeWidth="1.600" /></Svg>
          </Tool>
          <Spacer />
          <Stack $top={7}><DotsIcon /></Stack>
          <HScroll>
            <ScrollButton aria-label="左へスクロール"><Tri dir="left" /></ScrollButton>
            <Thumb />
            <Spacer />
            <ScrollButton aria-label="右へスクロール"><Tri dir="right" /></ScrollButton>
          </HScroll>
        </SheetBar>

        <StatusBar>
          <span>準備完了</span>
          <StatusButton $left={20} aria-label="マクロの記録">
            <Svg w={13} h={13} s="#666"><path d="M3.500 1.500h9v11h-11V5M3.500 3.500h9" /><path d="M4 6.500h2M7 6.500h2M10 6.500h1.500M4 8.500h2M7 8.500h2M10 8.500h1.500M4 10.500h2M7 10.500h2" /><circle cx="2.500" cy="2.500" r="2.300" fill="#555" stroke="none" /></Svg>
          </StatusButton>
          <StatusButton $left={18} $bold>
            <Svg w={16} h={15} s="#555" sw={1.200}><path d="M5 1C-1 3-.5 11 4.500 12.500" strokeDasharray="3 1" /><path d="M5 4.500l4 1.500 4-1.500M9 6v3l-2.500 5" /><circle cx="9" cy="2.500" r="1.300" fill="#555" stroke="none" /><path d="m9 8 6 6M15 8l-6 6" strokeWidth="1.600" /></Svg>
            アクセシビリティ: 検討が必要です
          </StatusButton>
          <Spacer />
          <StatusButton>
            <Svg w={16} h={15} s="none"><path d="M0 1h15v10H0zM4 12h4v2H4z" fill="#444" /><circle cx="11" cy="10" r="5" fill="#f3f3f3" /><circle cx="11" cy="10" r="2.800" stroke="#444" strokeWidth="1.600" /><circle cx="11" cy="10" r="4.200" stroke="#444" strokeWidth="1.200" strokeDasharray="1.700 1.600" /></Svg>
            表示設定
          </StatusButton>
          <Gap $w={19} />
          <View $on aria-label="標準"><Svg w={14} h={13} s="#777"><path d="M.5.5h13v12H.5zM.5 4.500h13M.5 8.500h13M5 .5v12M9.500.5v12" /></Svg></View>
          <View aria-label="ページ レイアウト"><Svg w={14} h={13} s="#777"><path d="M.5.5h13v12H.5zM3.500 2.500h7v8h-7zM5 4.500h4M5 6.500h4M5 8.500h4" /></Svg></View>
          <View aria-label="改ページ プレビュー"><Svg w={14} h={13} s="#777"><path d="M.5.5h13v12H.5zM4.500.5v7h5v-7M7 .5v7" /></Svg></View>
          <Tool $w={19} $h={20} aria-label="縮小"><Svg w={8} h={8} s="#555"><path d="M0 3.500h8" /></Svg></Tool>
          <Zoom><input type="range" aria-label="ズーム" min="0" max="100" defaultValue="65" /></Zoom>
          <Tool $w={17} $h={20} aria-label="拡大"><Svg w={8} h={8} s="#555"><path d="M0 3.500h8M3.500 0v8" /></Svg></Tool>
          <Percent>190%</Percent>
        </StatusBar>
      </Window>
    </>
  );
}
